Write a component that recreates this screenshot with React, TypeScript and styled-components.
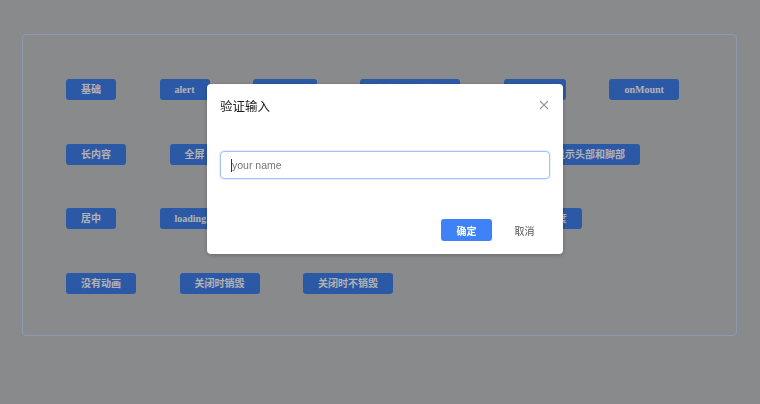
import React from "react";
import styled, { createGlobalStyle } from "styled-components";

const GlobalStyle = createGlobalStyle`
    html, body {
        margin: 0;
        padding: 0;
        background-color: #c5c6c9;
    }
    * {
        box-sizing: border-box;
    }
`;

const Page = styled.div`
    padding: 34px 23px 0 22px;
    height: 404px;
`;

const Panel = styled.div`
    /* border: 1px solid red; */
    height: 302px;
    border: 1px solid #cbdcfd;
    border-radius: 4px;
    padding: 44px 43px;
    display: flex;
    flex-direction: column;
    gap: 43.5px;
`;

const Row = styled.div`
    display: flex;
    gap: 43.5px;
`;

const DemoButton = styled.button`
    height: 21px;
    padding: 0 15px;
    border: none;
    border-radius: 3px;
    background-color: #3f80ec;
    color: #ffffff;
    font-family: "Liberation Serif", "Noto Sans CJK SC", serif;
    font-weight: bold;
    font-size: 10px;
    line-height: 21px;
    white-space: nowrap;
`;

const Mask = styled.div`
    position: fixed;
    inset: 0;
    background-color: rgba(0, 0, 0, 0.3);
`;

const Dialog = styled.div`
    position: absolute;
    left: 207px;
    top: 84px;
    width: 356px;
    height: 170px;
    background-color: white;
    border-radius: 4px;
    box-shadow: 0 1px 4px rgba(0, 0, 0, 0.25);
    padding: 11px 13px 13px 13px;
    display: flex;
    flex-direction: column;
`;

const DialogHeader = styled.div`
    display: flex;
    align-items: center;
    justify-content: space-between;
    height: 20px;
`;

const DialogTitle = styled.h3`
    margin: 0;
    font-family: "Noto Sans CJK SC", "Noto Sans", sans-serif;
    font-weight: normal;
    font-size: 12.5px;
    color: #1f1f1f;
`;

const CloseButton = styled.span`
    display: flex;
    width: 10px;
    height: 10px;
    margin-right: 1px;
`;

const DialogBody = styled.div`
    padding-top: 36px;
`;

const InputWrap = styled.div`
    position: relative;
    height: 28px;
`;

const TextInput = styled.input`
    width: 100%;
    height: 28px;
    border: 1px solid #a3c2f7;
    border-radius: 4px;
    box-shadow: 0 0 0 1px rgba(64, 128, 240, 0.12);
    padding: 0 11px;
    outline: none;
    font-family: "Liberation Sans", "Noto Sans", sans-serif;
    font-size: 10.5px;
    color: #333;
    caret-color: transparent;
    ::placeholder {
        color: #c2c2c2;
    }
`;

const Caret = styled.span`
    position: absolute;
    left: 11px;
    top: 8px;
    width: 1px;
    height: 13px;
    background-color: #333;
`;

const DialogFooter = styled.div`
    margin-top: auto;
    display: flex;
    justify-content: flex-end;
    gap: 7px;
`;

const FooterButton = styled.button<{ primary?: boolean }>`
    width: 51px;
    height: 22px;
    border: none;
    border-radius: 3px;
    background-color: ${(p) => (p.primary ? "#3f82f7" : "transparent")};
    color: ${(p) => (p.primary ? "#ffffff" : "#555555")};
    font-family: "Noto Sans CJK SC", "Noto Sans", sans-serif;
    font-weight: ${(p) => (p.primary ? "bold" : "normal")};
    font-size: 10px;
    padding: 0;
`;

const rows: string[][] = [
    ["基础", "alert", "confirm", "自定义底部按钮", "prompt", "onMount"],
    ["长内容", "全屏", "自定义页脚", "禁止点击遮罩关闭", "显示头部和脚部"],
    ["居中", "loading", "可以拖拽", "自定义样式", "自定义宽度"],
    ["没有动画", "关闭时销毁", "关闭时不销毁"],
];

export default function App() {
    return (
        <>
            <GlobalStyle />
            <Page>
                <Panel>
                    {rows.map((row, i) => (
                        <Row key={i}>
                            {row.map((label) => (
                                <DemoButton key={label}>{label}</DemoButton>
                            ))}
                        </Row>
                    ))}
                </Panel>
            </Page>
            <Mask>
                <Dialog>
                    <DialogHeader>
                        <DialogTitle>验证输入</DialogTitle>
                        <CloseButton>
                            <svg width="10" height="10" viewBox="0 0 10 10">
                                <path d="M1 1 L9 9 M9 1 L1 9" stroke="#9a9a9a" strokeWidth="1.1" />
                            </svg>
                        </CloseButton>
                    </DialogHeader>
                    <DialogBody>
                        <InputWrap>
                            <TextInput placeholder="your name" />
                            <Caret />
                        </InputWrap>
                    </DialogBody>
                    <DialogFooter>
                        <FooterButton primary>确定</FooterButton>
                        <FooterButton>取消</FooterButton>
                    </DialogFooter>
                </Dialog>
            </Mask>
        </>
    );
}
